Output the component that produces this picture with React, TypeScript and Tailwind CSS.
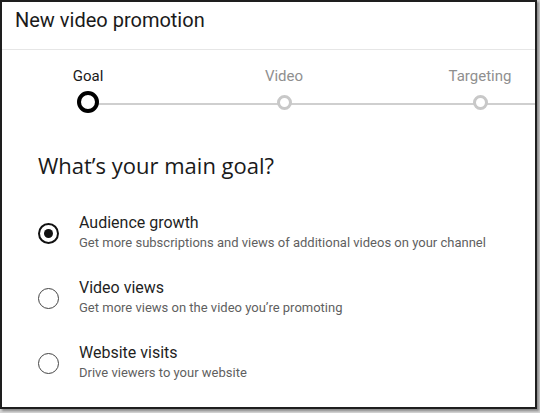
import React from 'react';

type Goal = { title: string; description: string; selected?: boolean };

const goals: Goal[] = [
    { title: 'Audience growth', description: 'Get more subscriptions and views of additional videos on your channel', selected: true },
    { title: 'Video views', description: 'Get more views on the video you’re promoting' },
    { title: 'Website visits', description: 'Drive viewers to your website' },
];

const steps = ['Goal', 'Video', 'Targeting'];

const Radio: React.FC<{ checked?: boolean }> = ({ checked }) => (
    <div
        className={`w-[21px] h-[21px] rounded-full flex items-center justify-center shrink-0 ${
            checked ? 'border-2 border-[#111]' : 'border-[1.5px] border-[#444]'
        }`}
    >
        {checked && <div className="w-[9px] h-[9px] rounded-full bg-[#111]"></div>}
    </div>
);

const App: React.FC = () => {
    return (
        <div className="w-[540px] h-[413px] bg-[#d4d4d4] font-['Roboto',sans-serif]">
            <div className="w-[537px] h-[409px] bg-white border-2 border-[#1e1e1e] shadow-[2px_2px_2px_rgba(0,0,0,0.35)] overflow-hidden">
                <div className="h-[48px] border-b border-[#e6e6e6] pl-[13px] pt-[4px]">
                    <h1 className="text-[20px] leading-[28px] text-[#1a1a1a]">New video promotion</h1>
                </div>

                <div className="relative pl-[26px] pt-[16px]">
                    <div className="absolute left-[86px] right-0 top-[53px] h-[2px] bg-[#cfcfcf]"></div>
                    <div className="flex gap-[76px]">
                        {steps.map((step, i) => (
                            <div key={step} className="w-[120px] shrink-0 flex flex-col items-center">
                                <span className={`text-[15px] leading-[20px] ${i === 0 ? 'text-[#1a1a1a]' : 'text-[#8f8f8f]'}`}>{step}</span>
                                <div className="h-[32px] flex items-center relative">
                                    {i === 0 ? (
                                        <div className="w-[22px] h-[22px] rounded-full border-[4px] border-black bg-white"></div>
                                    ) : (
                                        <div className="w-[15px] h-[15px] rounded-full border-[3px] border-[#c8c8c8] bg-white"></div>
                                    )}
                                </div>
                            </div>
                        ))}
                    </div>
                </div>

                <h2 className="pl-[36px] mt-[31px] text-[22px] leading-[32px] text-[#1a1a1a] font-['Open_Sans',sans-serif]">
                    What’s your main goal?
                </h2>

                <div className="mt-[32px] flex flex-col gap-[25px] pl-[36px]">
                    {goals.map(goal => (
                        <div key={goal.title} className="flex items-center h-[40px]">
                            <Radio checked={goal.selected} />
                            <div className="ml-[20px] flex flex-col">
                                <span className="text-[16px] leading-[20px] text-[#1f1f1f]">{goal.title}</span>
                                <span className="text-[13px] leading-[20px] text-[#5f5f5f]">{goal.description}</span>
                            </div>
                        </div>
                    ))}
                </div>
            </div>
        </div>
    );
};

export default App;
